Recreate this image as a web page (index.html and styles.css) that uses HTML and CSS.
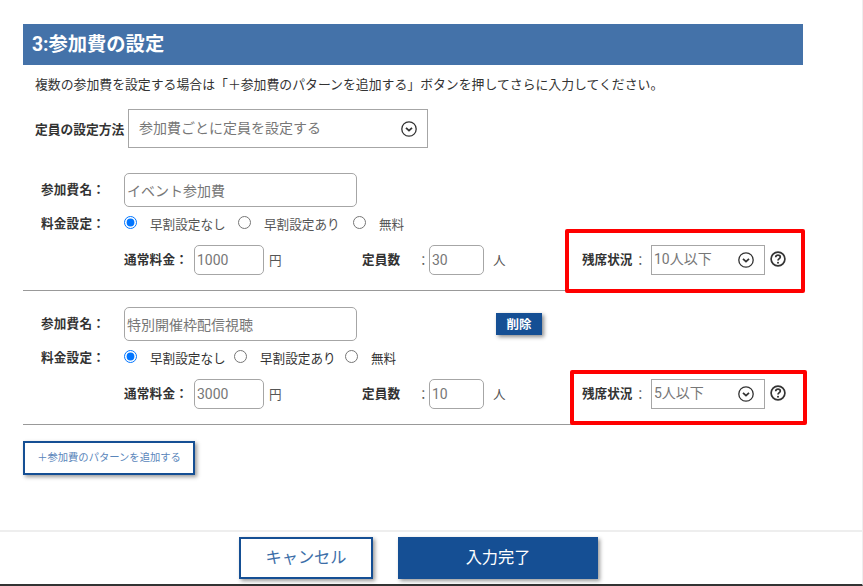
FILE: index.html
```html
<!DOCTYPE html>
<html lang="ja">
<head>
<meta charset="utf-8">
<title>参加費の設定</title>
<link rel="stylesheet" href="styles.css">
</head>
<body>
<div class="page">
  <main class="content">
    <h2 class="heading">3:参加費の設定</h2>
    <p class="lead">複数の参加費を設定する場合は「＋参加費のパターンを追加する」ボタンを押してさらに入力してください。</p>
    <div class="method">
      <span class="method-label">定員の設定方法</span>
      <div class="select select-wide">
        <span>参加費ごとに定員を設定する</span>
        <svg class="chevron" viewBox="0 0 16 16"><circle cx="8" cy="8" r="7.2"/><path d="M5 6.8 8 9.6 11 6.8"/></svg>
      </div>
    </div>

    <section class="fee fee-first">
      <div class="name-row">
        <label class="label">参加費名：</label>
        <div class="input input-name">イベント参加費</div>
      </div>
      <div class="radio-row">
        <span class="label">料金設定：</span>
        <label class="radio r1"><input type="radio" name="a" checked><span>早割設定なし</span></label>
        <label class="radio r2"><input type="radio" name="a"><span>早割設定あり</span></label>
        <label class="radio"><input type="radio" name="a"><span>無料</span></label>
      </div>
      <div class="price-row">
        <span class="label-price">通常料金：</span>
        <div class="input input-price">1000</div>
        <span class="unit unit-yen">円</span>
        <span class="label-cap">定員数</span>
        <span class="colon">：</span>
        <div class="input input-cap">30</div>
        <span class="unit unit-person">人</span>
        <span class="label-status">残席状況</span>
        <span class="colon colon-status">：</span>
        <div class="select select-status">
          <span>10人以下</span>
          <svg class="chevron" viewBox="0 0 16 16"><circle cx="8" cy="8" r="7.2"/><path d="M5 6.8 8 9.6 11 6.8"/></svg>
        </div>
        <svg class="help" viewBox="0 0 16 16"><circle cx="8" cy="8" r="6.9"/><path d="M5.7 6.2C5.8 4.8 6.8 4.1 8 4.1 9.3 4.1 10.3 4.9 10.3 6 10.3 7.6 8 7.7 8 9.6"/><circle class="dot" cx="8" cy="11.7" r="1"/></svg>
      </div>
    </section>

    <section class="fee fee-second">
      <div class="name-row">
        <label class="label">参加費名：</label>
        <div class="input input-name">特別開催枠配信視聴</div>
        <button class="delete" type="button">削除</button>
      </div>
      <div class="radio-row radio-row-dark">
        <span class="label">料金設定：</span>
        <label class="radio r1b"><input type="radio" name="b" checked><span>早割設定なし</span></label>
        <label class="radio r2b"><input type="radio" name="b"><span>早割設定あり</span></label>
        <label class="radio"><input type="radio" name="b"><span>無料</span></label>
      </div>
      <div class="price-row">
        <span class="label-price">通常料金：</span>
        <div class="input input-price">3000</div>
        <span class="unit unit-yen">円</span>
        <span class="label-cap">定員数</span>
        <span class="colon">：</span>
        <div class="input input-cap">10</div>
        <span class="unit unit-person">人</span>
        <span class="label-status">残席状況</span>
        <span class="colon colon-status">：</span>
        <div class="select select-status">
          <span>5人以下</span>
          <svg class="chevron" viewBox="0 0 16 16"><circle cx="8" cy="8" r="7.2"/><path d="M5 6.8 8 9.6 11 6.8"/></svg>
        </div>
        <svg class="help" viewBox="0 0 16 16"><circle cx="8" cy="8" r="6.9"/><path d="M5.7 6.2C5.8 4.8 6.8 4.1 8 4.1 9.3 4.1 10.3 4.9 10.3 6 10.3 7.6 8 7.7 8 9.6"/><circle class="dot" cx="8" cy="11.7" r="1"/></svg>
      </div>
    </section>

    <button class="add" type="button">＋参加費のパターンを追加する</button>
  </main>

  <footer class="actions">
    <button class="btn btn-cancel" type="button">キャンセル</button>
    <button class="btn btn-submit" type="button">入力完了</button>
  </footer>

  <div class="highlight highlight-1"></div>
  <div class="highlight highlight-2"></div>
</div>
</body>
</html>
```

FILE: styles.css
```css
* { box-sizing: border-box; }
html, body { margin: 0; padding: 0; }
body {
  background: #fff;
  color: #333;
  font-family: Roboto, "Noto Sans CJK JP", sans-serif;
  font-size: 13px;
  overflow: hidden;
}
.page {
  position: relative;
  width: 863px;
  height: 586px;
  display: flex;
  flex-direction: column;
  border-right: 1px solid #eee;
  border-bottom: 2px solid #333;
}
.content {
  flex: 1;
  padding: 24px 0 0 23px;
}
.heading {
  width: 780px;
  height: 41px;
  margin: 0;
  padding: 0 0 0 9px;
  background: #4472a9;
  color: #fff;
  font-size: 19.3px;
  font-weight: 700;
  line-height: 41px;
}
.lead {
  margin: 10px 0 0 12px;
  height: 20px;
  font-size: 12.87px;
  line-height: 20px;
  white-space: nowrap;
}
.method {
  display: flex;
  align-items: center;
  margin: 14px 0 0 12px;
}
.method-label {
  width: 93px;
  font-size: 12.75px;
  font-weight: 700;
}
.select {
  display: flex;
  align-items: center;
  justify-content: space-between;
  border: 1px solid #a6a6a6;
  background: #fff;
  color: #777;
}
.select-wide {
  width: 300px;
  height: 39px;
  padding: 0 10px 3px 10px;
  font-size: 14px;
}
.select-wide .chevron { margin-bottom: -3px; }
.chevron {
  width: 16px;
  height: 16px;
  flex: none;
  fill: none;
  stroke: #333;
  stroke-width: 1.3;
}
.chevron path { stroke-width: 1.8; }
.input {
  display: flex;
  align-items: center;
  border: 1px solid #a6a6a6;
  border-radius: 5px;
  color: #777;
  font-size: 14px;
  padding-left: 2px;
}
.fee { width: 780px; padding-left: 18px; border-bottom: 1px solid #999; }
.fee-first { margin-top: 25px; height: 118px; }
.fee-second { margin-top: 16px; height: 118px; }
.name-row { display: flex; align-items: center; height: 34px; }
.label {
  width: 83px;
  padding-bottom: 3px;
  font-size: 12.6px;
  font-weight: 700;
  letter-spacing: .2px;
}
.radio-row .label { padding-bottom: 1px; }
.input-name { width: 233px; height: 34px; }
.delete {
  margin-left: 139px;
  width: 46px;
  height: 22px;
  padding: 0 0 2px;
  border: 0;
  background: #154f94;
  color: #fff;
  font: 700 12.5px Roboto, "Noto Sans CJK JP", sans-serif;
  box-shadow: 2px 2px 4px rgba(0,0,0,.45);
}
.radio-row {
  display: flex;
  align-items: center;
  height: 20px;
  margin-top: 6px;
  color: #555;
}
.radio-row .label { color: #333; }
.radio-row-dark { color: #333; }
.radio {
  display: flex;
  align-items: center;
  font-size: 12.6px;
  white-space: nowrap;
}
.radio input {
  width: 13px;
  height: 13px;
  margin: 0 13px 2px 0;
}
.r1 { width: 114px; }
.r2 { width: 115px; }
.r1b { width: 110px; }
.r2b { width: 111px; }
.price-row {
  display: flex;
  align-items: center;
  height: 30px;
  margin-top: 12px;
  padding-left: 83px;
  font-size: 12.6px;
}
.label-price { width: 70px; padding-bottom: 3px; font-weight: 700; letter-spacing: .2px; }
.input-price { width: 70px; height: 30px; }
.unit { color: #555; padding-bottom: 2px; }
.unit-yen { width: 98px; padding-left: 5px; }
.label-cap { width: 55px; padding-bottom: 3px; font-weight: 700; letter-spacing: .2px; }
.colon { width: 12px; color: #555; padding-bottom: 1px; }
.input-cap { width: 55px; height: 30px; }
.unit-person { width: 98px; padding-left: 9px; }
.label-status { width: 52px; padding-bottom: 3px; font-weight: 700; }
.colon-status { width: 17px; }
.select-status {
  width: 114px;
  height: 30px;
  padding: 0 10px 0 2px;
  font-size: 14px;
}
.select-status span { padding-bottom: 4px; }
.select-status .chevron { margin-top: -1px; }
.help {
  width: 16px;
  height: 16px;
  margin: -2px 0 0 5px;
  fill: none;
  stroke: #333;
  stroke-width: 1.7;
}
.help .dot { fill: #333; stroke: none; }
.add {
  display: block;
  width: 172px;
  height: 34px;
  margin-top: 16px;
  padding: 0 0 3px;
  border: 2px solid #154f94;
  background: #fff;
  color: #5a86bb;
  font: 10.3px Roboto, "Noto Sans CJK JP", sans-serif;
  box-shadow: 2px 2px 4px rgba(0,0,0,.4);
}
.actions {
  height: 54px;
  border-top: 2px solid #eee;
  display: flex;
  gap: 25px;
  padding: 5px 0 0 239px;
}
.btn {
  height: 42px;
  padding: 0 0 4px;
  font: 16.2px Roboto, "Noto Sans CJK JP", sans-serif;
  box-shadow: 2px 2px 4px rgba(0,0,0,.4);
}
.btn-cancel {
  width: 134px;
  border: 2px solid #154f94;
  background: #fff;
  color: #3c6ea8;
}
.btn-submit {
  width: 200px;
  border: 0;
  background: #154f94;
  color: #fff;
}
.highlight {
  position: absolute;
  border: 4px solid #ff0000;
  border-radius: 2px;
  pointer-events: none;
}
.highlight-1 { left: 565px; top: 229px; width: 240px; height: 64px; }
.highlight-2 { left: 570px; top: 370px; width: 237px; height: 55px; }
```
